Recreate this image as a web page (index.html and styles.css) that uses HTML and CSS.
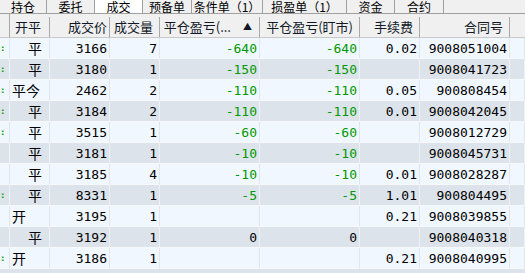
FILE: index.html
```html
<!DOCTYPE html>
<html lang="zh">
<head>
  <meta charset="UTF-8" />
  <title>成交</title>
  <link rel="stylesheet" href="styles.css">
</head>
<body>
  <!-- вкладки -->
  <div class="tabs">
    <div class="tab t47">持仓</div>
    <div class="tab t48">委托</div>
    <div class="tab t48 active">成交</div>
    <div class="tab t49">预备单</div>
    <div class="tab t71">条件单（1）</div>
    <div class="tab t84">损盈单（1）</div>
    <div class="tab t48">资金</div>
    <div class="tab t49">合约</div>
  </div>

  <table class="grid">
    <colgroup>
      <col class="c-mark"><col class="c-kp"><col class="c-price"><col class="c-qty">
      <col class="c-pl"><col class="c-pl"><col class="c-fee"><col class="c-id"><col>
    </colgroup>
    <thead>
      <tr>
        <th></th>
        <th><div class="hd left">开平</div></th>
        <th><div class="hd tight">成交价</div></th>
        <th><div class="hd">成交量</div></th>
        <th><div class="hd sort"><span>平仓盈亏(...</span><span class="arrow">▲</span></div></th>
        <th><div class="hd">平仓盈亏(盯市)</div></th>
        <th><div class="hd">手续费</div></th>
        <th><div class="hd">合同号</div></th>
        <th></th>
      </tr>
    </thead>
    <tbody>
      <tr><td class="mark">:</td><td class="kp ind">平</td><td>3166</td><td>7</td><td class="neg">-640</td><td class="neg">-640</td><td>0.02</td><td>9008051004</td><td></td></tr>
      <tr><td class="mark">:</td><td class="kp ind">平</td><td>3180</td><td>1</td><td class="neg">-150</td><td class="neg">-150</td><td></td><td>9008041723</td><td></td></tr>
      <tr><td class="mark">:</td><td class="kp">平今</td><td>2462</td><td>2</td><td class="neg">-110</td><td class="neg">-110</td><td>0.05</td><td>900808454</td><td></td></tr>
      <tr><td class="mark">:</td><td class="kp ind">平</td><td>3184</td><td>2</td><td class="neg">-110</td><td class="neg">-110</td><td>0.01</td><td>9008042045</td><td></td></tr>
      <tr><td class="mark">:</td><td class="kp ind">平</td><td>3515</td><td>1</td><td class="neg">-60</td><td class="neg">-60</td><td></td><td>9008012729</td><td></td></tr>
      <tr><td class="mark"></td><td class="kp ind">平</td><td>3181</td><td>1</td><td class="neg">-10</td><td class="neg">-10</td><td></td><td>9008045731</td><td></td></tr>
      <tr><td class="mark"></td><td class="kp ind">平</td><td>3185</td><td>4</td><td class="neg">-10</td><td class="neg">-10</td><td>0.01</td><td>9008028287</td><td></td></tr>
      <tr><td class="mark">:</td><td class="kp ind">平</td><td>8331</td><td>1</td><td class="neg">-5</td><td class="neg">-5</td><td>1.01</td><td>900804495</td><td></td></tr>
      <tr><td class="mark"></td><td class="kp">开</td><td>3195</td><td>1</td><td></td><td></td><td>0.21</td><td>9008039855</td><td></td></tr>
      <tr><td class="mark"></td><td class="kp ind">平</td><td>3192</td><td>1</td><td>0</td><td>0</td><td></td><td>9008040318</td><td></td></tr>
      <tr><td class="mark">:</td><td class="kp">开</td><td>3186</td><td>1</td><td></td><td></td><td>0.21</td><td>9008040995</td><td></td></tr>
    </tbody>
  </table>
  <div class="tail"></div>
</body>
</html>
```

FILE: styles.css
```css
* {
  box-sizing: border-box;
}

body {
  margin: 0;
  width: 525px;
  height: 273px;
  overflow: hidden;
  background: #f0f7ff;
  font-family: "Noto Sans CJK SC", sans-serif;
  color: #000;
}

/* tab strip */
.tabs {
  display: flex;
  height: 14px;
  background: #f0f0f0;
  border-bottom: 1px solid #a0a0a0;
  overflow: hidden;
}

.tab {
  flex: none;
  height: 13px;
  border-right: 1px solid #a0a0a0;
  font-size: 12px;
  line-height: 13px;
  text-align: center;
  white-space: nowrap;
  overflow: hidden;
}

.tab.active {
  background: #ffffff;
}

.t47 { width: 47px; }
.t48 { width: 48px; }
.t49 { width: 49px; }
.t71 { width: 71px; }
.t84 { width: 84px; }

/* grid */
.grid {
  width: 525px;
  table-layout: fixed;
  border-collapse: separate;
  border-spacing: 0;
}

.c-mark { width: 10px; }
.c-kp { width: 40px; }
.c-price { width: 60px; }
.c-qty { width: 50px; }
.c-pl { width: 100px; }
.c-fee { width: 60px; }
.c-id { width: 90px; }

.grid th {
  height: 24px;
  padding: 0;
  background: #f0f0f0;
  border-bottom: 1px solid #c8c8c8;
  font-weight: normal;
  font-size: 13px;
  vertical-align: top;
}

.hd {
  height: 20px;
  margin-top: 3px;
  padding-right: 6px;
  line-height: 20px;
  text-align: right;
  white-space: nowrap;
  overflow: hidden;
  border-right: 1px solid #a8a8a8;
  box-shadow: 1px 0 0 #ffffff;
  color: #101828;
}

.grid th:first-child {
  border-right: 1px solid #a8a8a8;
}

.hd.left {
  text-align: left;
  padding-left: 5px;
}

.hd.tight {
  padding-right: 2px;
}

.hd.sort {
  display: flex;
  justify-content: flex-end;
  gap: 12px;
  padding-right: 7px;
}

.arrow {
  font-size: 9px;
}

.grid td {
  height: 21px;
  padding: 0 2px 0 0;
  border-right: 1px solid #e2e6ea;
  border-bottom: 1px solid #f6f8fa;
  font-family: "DejaVu Sans Mono", monospace;
  font-size: 13px;
  text-align: right;
  white-space: nowrap;
  overflow: hidden;
}

.grid tbody tr:nth-child(even) td {
  background: #dde3ea;
  border-right-color: #eef1f4;
}

.grid td.kp {
  font-family: "Noto Sans CJK SC", sans-serif;
  font-size: 14px;
  text-align: left;
  padding-left: 2px;
}

.grid td.ind {
  padding-left: 18px;
}

.grid td.mark {
  padding: 0;
  text-align: left;
  color: #00a000;
  font-size: 9px;
  font-weight: bold;
}

.neg {
  color: #009900;
}

/* the next row, cut by the window edge */
.tail {
  height: 21px;
  background: #dde3ea;
}
```
